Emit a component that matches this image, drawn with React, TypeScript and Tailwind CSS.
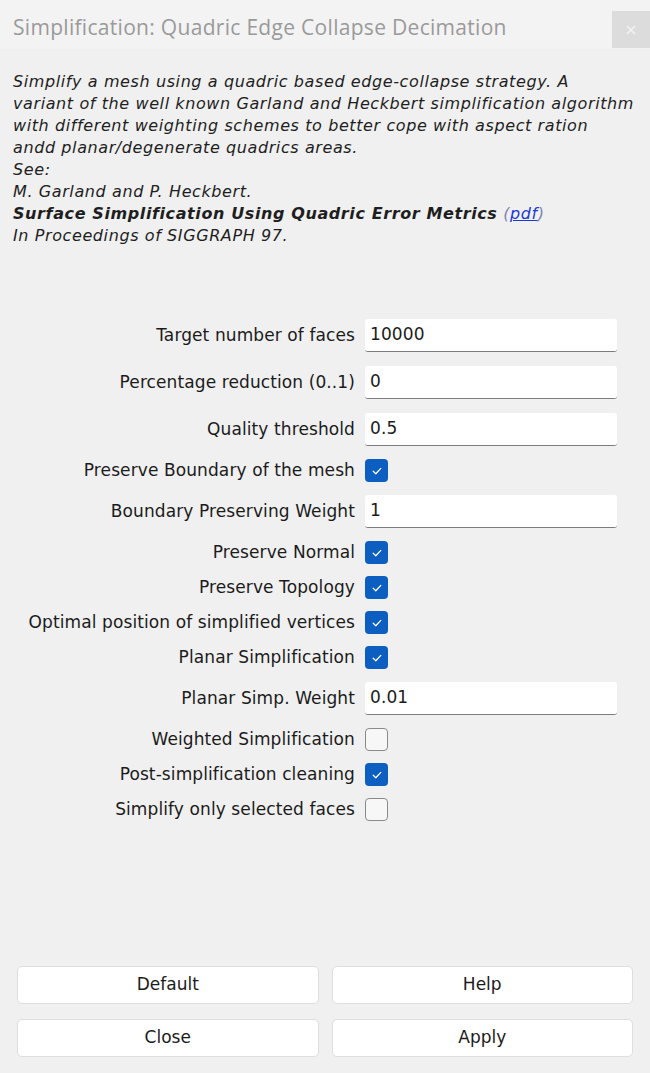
import React from "react";

type Row =
  | { kind: "input"; label: string; value: string }
  | { kind: "check"; label: string; checked: boolean };

const rows: Row[] = [
  { kind: "input", label: "Target number of faces", value: "10000" },
  { kind: "input", label: "Percentage reduction (0..1)", value: "0" },
  { kind: "input", label: "Quality threshold", value: "0.5" },
  { kind: "check", label: "Preserve Boundary of the mesh", checked: true },
  { kind: "input", label: "Boundary Preserving Weight", value: "1" },
  { kind: "check", label: "Preserve Normal", checked: true },
  { kind: "check", label: "Preserve Topology", checked: true },
  { kind: "check", label: "Optimal position of simplified vertices", checked: true },
  { kind: "check", label: "Planar Simplification", checked: true },
  { kind: "input", label: "Planar Simp. Weight", value: "0.01" },
  { kind: "check", label: "Weighted Simplification", checked: false },
  { kind: "check", label: "Post-simplification cleaning", checked: true },
  { kind: "check", label: "Simplify only selected faces", checked: false },
];

function Check({ checked }: { checked: boolean }) {
  if (checked) {
    return (
      <div className="w-[23px] h-[23px] rounded-[4px] bg-[#0c5fc0] flex items-center justify-center">
        <svg width="12" height="12" viewBox="0 0 12 12" fill="none">
          <path d="M2.2 6.3 L4.8 8.8 L9.8 3.4" stroke="white" strokeWidth="1.3" strokeLinecap="round" strokeLinejoin="round" />
        </svg>
      </div>
    );
  }
  return <div className="w-[23px] h-[23px] rounded-[4px] border border-[#8a8a8a] bg-[#f7f7f7]" />;
}

const desc = [
  "Simplify a mesh using a quadric based edge-collapse strategy. A",
  "variant of the well known Garland and Heckbert simplification algorithm",
  "with different weighting schemes to better cope with aspect ration",
  "andd planar/degenerate quadrics areas.",
  "See:",
  "M. Garland and P. Heckbert.",
];

export default function App() {
  return (
    <div className="w-[650px] h-[1073px] bg-[#f0f0f0] flex flex-col text-[#1b1b1b]" style={{ fontFamily: "'DejaVu Sans', sans-serif" }}>
      <div className="h-[49px] bg-[#f3f3f3] flex items-center justify-between pl-[13px]">
        <div className="text-[21px] tracking-[0.3px] text-[#9a9a9a] mt-[6px]" style={{ fontFamily: "'Open Sans', 'Noto Sans', sans-serif" }}>
          Simplification: Quadric Edge Collapse Decimation
        </div>
        <div className="w-[38px] h-[37px] mt-[11px] self-start bg-[#dcdcdc] flex items-center justify-center text-[#f2f2f2] text-[16px]">
          ×
        </div>
      </div>

      <div className="pl-[13px] pt-[22px] italic text-[16px] leading-[22px] tracking-[0.6px] text-[#1e1e1e] whitespace-nowrap">
        {desc.map((l) => (
          <div key={l}>{l}</div>
        ))}
        <div>
          <span className="font-bold">Surface Simplification Using Quadric Error Metrics</span>{" "}
          <span className="text-[#7a86b0]">(</span>
          <span className="text-[#1a3ad8] underline">pdf</span>
          <span className="text-[#7a86b0]">)</span>
        </div>
        <div>In Proceedings of SIGGRAPH 97.</div>
      </div>

      <div className="mt-[65px] flex flex-col text-[17px] tracking-[0.1px]">
        {rows.map((r, i) => (
          <div key={i} className={"grid grid-cols-[365px_1fr] items-center " + (r.kind === "input" ? "h-[47px]" : "h-[35px]")}>
            <div className="text-right pr-[10px] text-[#1b1b1b] whitespace-nowrap">{r.label}</div>
            <div className="pr-[33px]">
              {r.kind === "input" ? (
                <div className="h-[33px] bg-white rounded-[3px] border-b border-[#7d7d7d] flex items-center pl-[5px] text-[17px] text-[#1b1b1b]">
                  {r.value}
                </div>
              ) : (
                <Check checked={r.checked} />
              )}
            </div>
          </div>
        ))}
      </div>

      <div className="mt-auto mb-[16px] px-[17px] grid grid-cols-2 gap-x-[13px] gap-y-[15px] text-[17px]">
        {["Default", "Help", "Close", "Apply"].map((b) => (
          <div key={b} className="h-[38px] bg-white border border-[#dedede] rounded-[5px] flex items-center justify-center text-[#1b1b1b]">
            {b}
          </div>
        ))}
      </div>
    </div>
  );
}
